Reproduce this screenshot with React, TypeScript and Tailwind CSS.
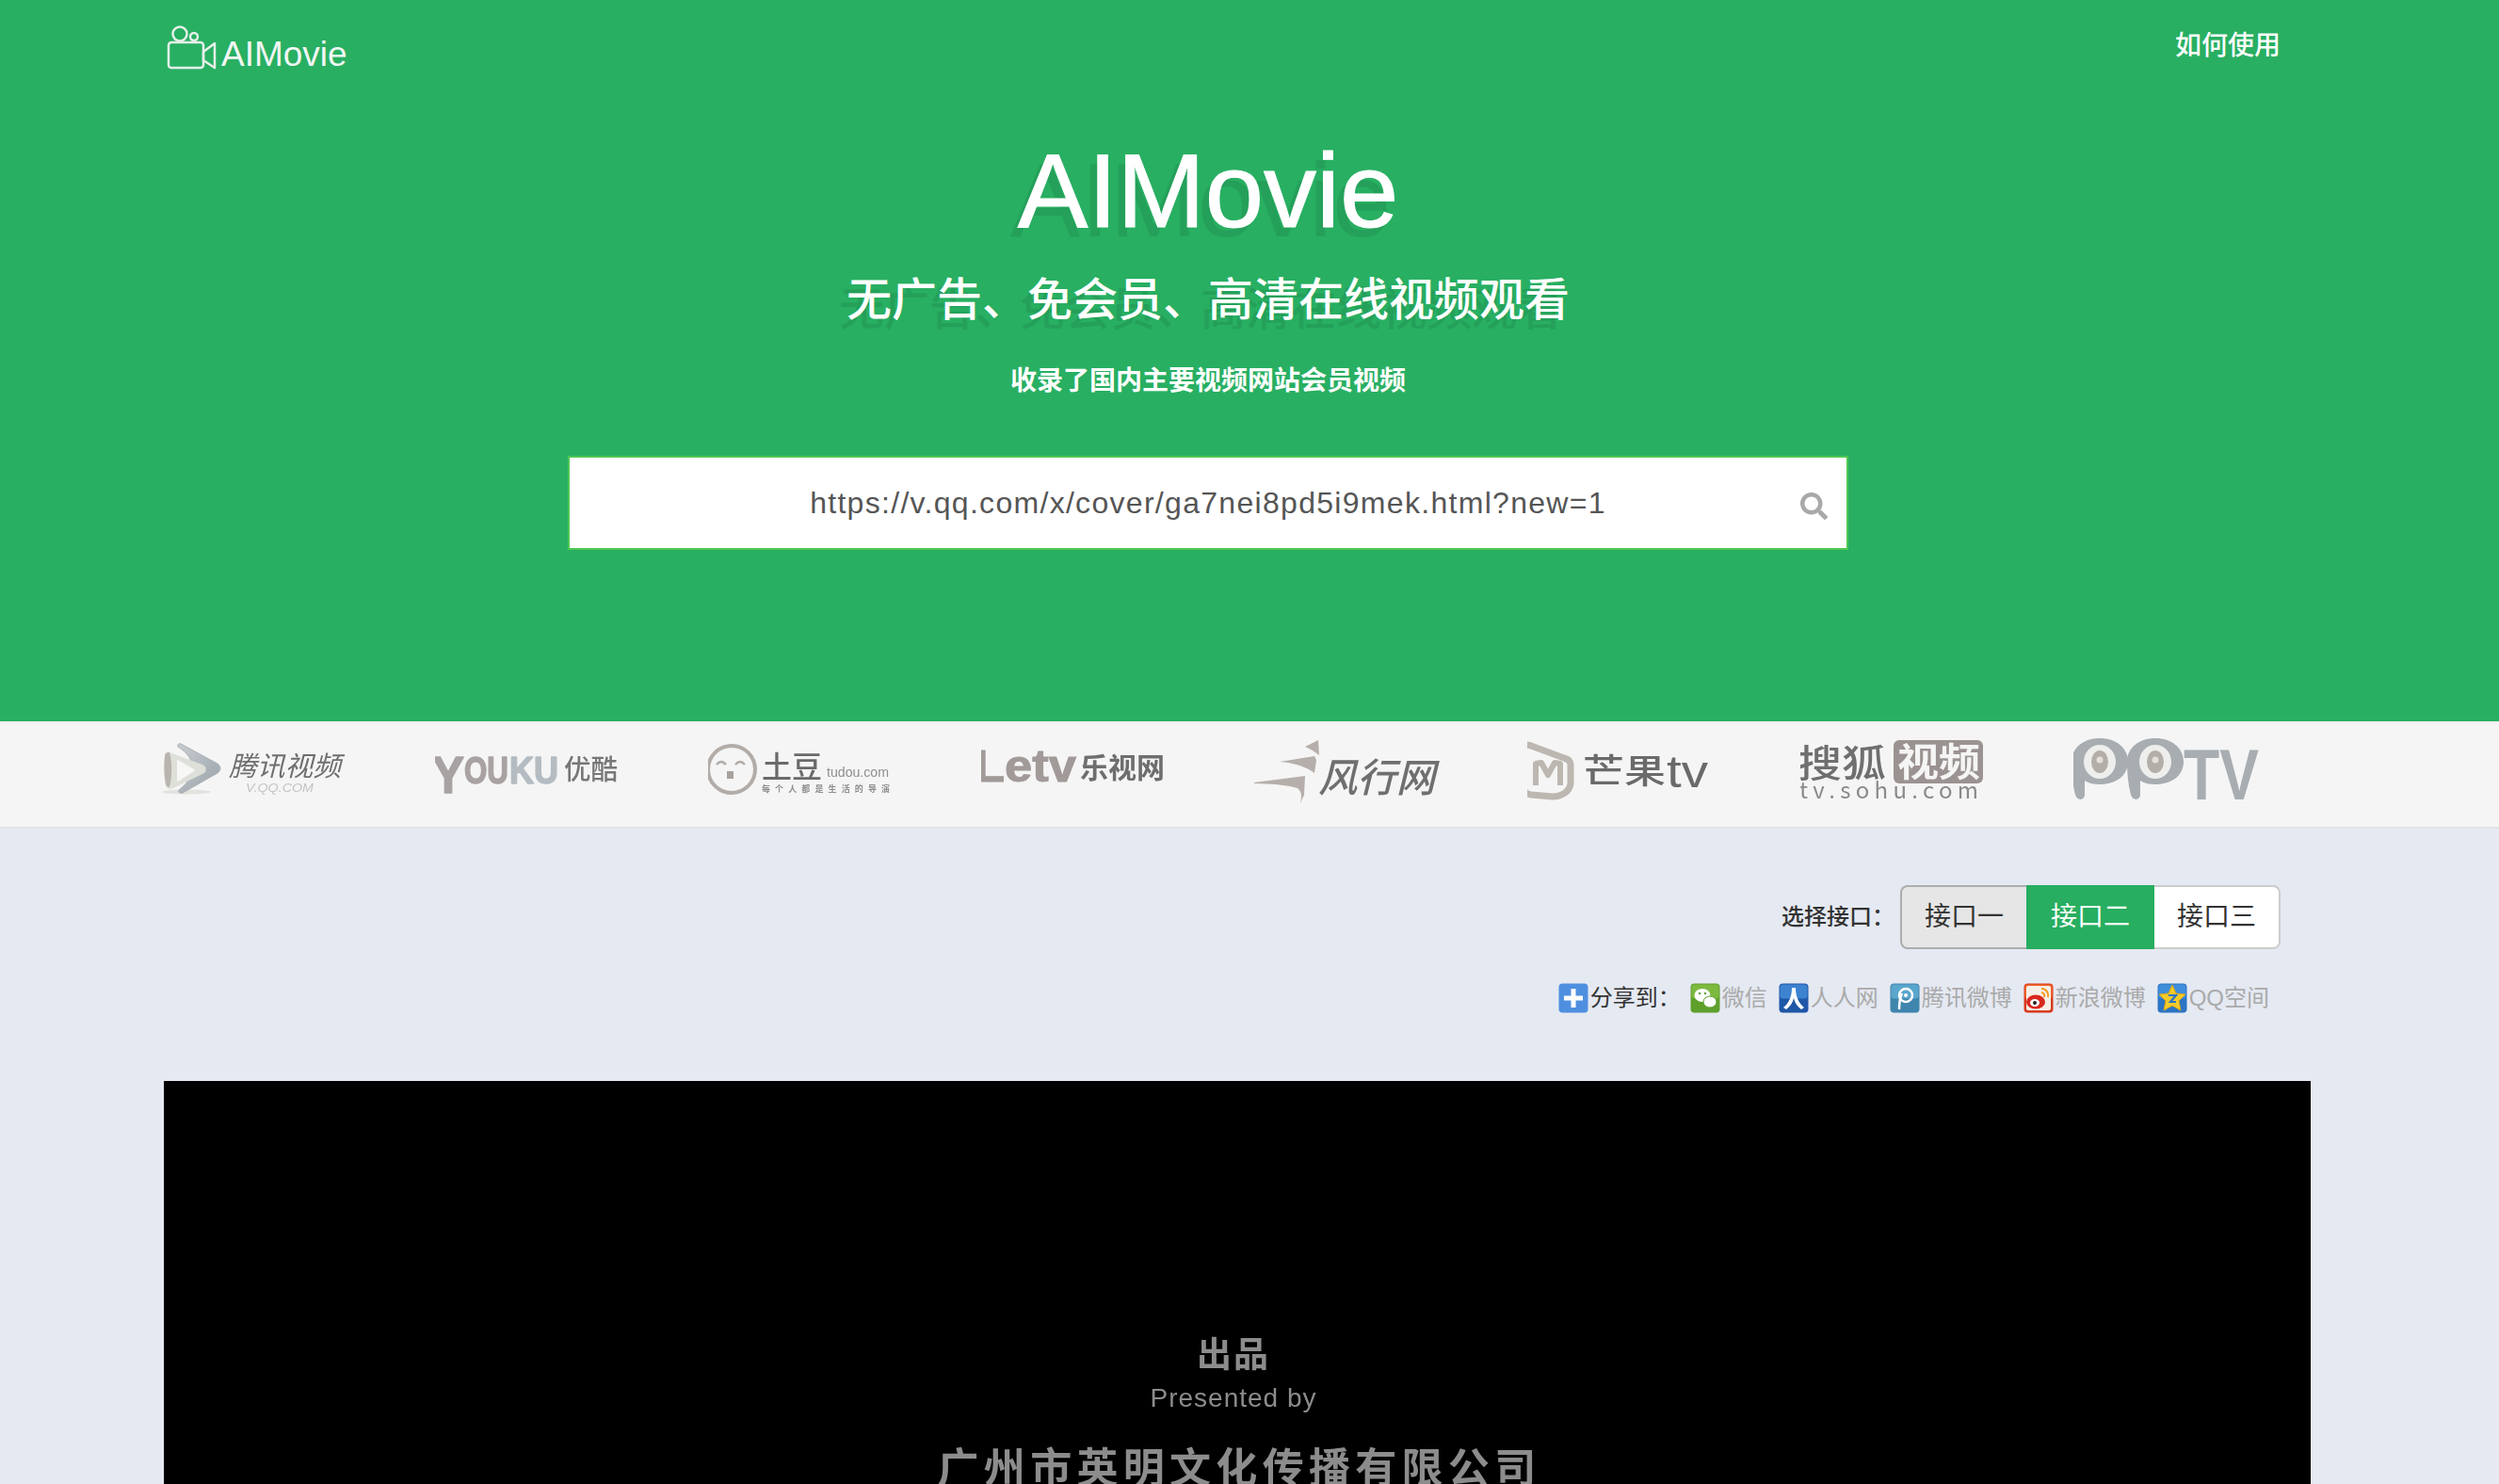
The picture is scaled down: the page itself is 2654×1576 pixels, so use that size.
import { FaSearch } from "react-icons/fa";

const cjk = "font-['Liberation_Sans','Noto_Sans_CJK_SC',sans-serif]";
const logoFont = "'Noto Sans CJK SC', sans-serif";
const latinFont = "'Liberation Sans', sans-serif";

function CameraLogo() {
    return (
        <svg width="54" height="52" viewBox="0 0 54 52" fill="none" stroke="#e6efe9" strokeWidth="2.5" strokeLinejoin="round">
            <circle cx="14" cy="12" r="7.5" />
            <circle cx="29" cy="15" r="4" />
            <rect x="2" y="21" width="37" height="27" rx="3" />
            <path d="M39 31l12-9v26l-12-8z" />
        </svg>
    );
}

function TencentLogo() {
    return (
        <svg width="240" height="110" viewBox="0 0 240 110">
            <defs>
                <linearGradient id="tc" x1="0" y1="0" x2="1" y2="1">
                    <stop offset="0" stopColor="#c9cdd0" />
                    <stop offset="1" stopColor="#98a2aa" />
                </linearGradient>
            </defs>
            <ellipse cx="26" cy="75" rx="26" ry="2.5" fill="#e2e2de" />
            <path d="M20 24l39 21c4 3 4 7 0 10L22 76c-3 1-5-1-4-3 9-7 14-14 14-24s-6-16-15-22c-1-2 1-4 3-3z" fill="url(#tc)" stroke="#a9b0b6" strokeLinejoin="round" />
            <path d="M8 33l35 13c5 2 5 8 0 10L12 71c-4 2-7 1-8-3-2-11-2-21-1-31 0-3 2-5 5-4z" fill="#dde0d8" />
            <path d="M3 37c0-3 2-4 5-4 3 11 3 25 0 37-2 0-3-1-4-3-2-10-2-20-1-30z" fill="#b9b4ae" />
            <path d="M17 42l17 10-17 11z" fill="#f7f7f5" stroke="#f7f7f5" strokeWidth="2" strokeLinejoin="round" />
            <text x="71" y="58" fontFamily={logoFont} fontSize="29" fontStyle="italic" fill="#6f6f6f" textLength="119" lengthAdjust="spacingAndGlyphs">腾讯视频</text>
            <text x="89" y="75" fontFamily={latinFont} fontSize="12" fontStyle="italic" fill="#c4c4c4" textLength="72" lengthAdjust="spacingAndGlyphs">V.QQ.COM</text>
        </svg>
    );
}

function YoukuLogo() {
    return (
        <svg width="240" height="110" viewBox="6 0 240 110">
            <text fontFamily={latinFont} fontWeight="700" stroke="#a9a2a2" strokeWidth="1.5" strokeLinejoin="round" fill="#a9a2a2">
                <tspan x="3" y="76" fontSize="56" textLength="34" lengthAdjust="spacingAndGlyphs">Y</tspan>
                <tspan x="37" y="66" fontSize="40" textLength="47" lengthAdjust="spacingAndGlyphs">OU</tspan>
                <tspan x="85" y="66" fontSize="40" fill="#b4bcc2" stroke="#b4bcc2" textLength="52" lengthAdjust="spacingAndGlyphs">KU</tspan>
            </text>
            <text x="143" y="62" fontFamily={logoFont} fontSize="29" fontWeight="500" fill="#777" textLength="57" lengthAdjust="spacingAndGlyphs">优酷</text>
        </svg>
    );
}

function TudouLogo() {
    return (
        <svg width="240" height="110" viewBox="5 0 240 110">
            <circle cx="30" cy="51" r="25" fill="none" stroke="#b2aca8" strokeWidth="4" />
            <path d="M14 46q5-6 10 0M34 46q5-6 10 0" fill="none" stroke="#b2aca8" strokeWidth="2.5" />
            <rect x="25" y="53" width="7" height="8" fill="#a8a29e" />
            <text x="62" y="60" fontFamily={logoFont} fontSize="32" fontWeight="500" fill="#6a6a6a" textLength="64" lengthAdjust="spacingAndGlyphs">土豆</text>
            <text x="131" y="59" fontFamily={latinFont} fontSize="14" fill="#8f8f8f" textLength="66" lengthAdjust="spacingAndGlyphs">tudou.com</text>
            <text x="62" y="75" fontFamily={logoFont} fontSize="9" fontWeight="700" fill="#8e8e8e" textLength="136">每个人都是生活的导演</text>
        </svg>
    );
}

function LetvLogo() {
    return (
        <svg width="240" height="110" viewBox="8 0 240 110">
            <text x="1" y="64" fontFamily={latinFont} fontSize="48" fontWeight="700" fill="#a19a98" stroke="#a19a98" textLength="108" lengthAdjust="spacingAndGlyphs">Letv</text>
            <text x="113" y="60" fontFamily={logoFont} fontSize="30" fontWeight="700" fill="#6e6e6e" textLength="90" lengthAdjust="spacingAndGlyphs">乐视网</text>
        </svg>
    );
}

function FengxingLogo() {
    return (
        <svg width="240" height="110" viewBox="8 0 240 110">
            <path d="M62 27l14-7 1 16c-5-4-10-7-15-9z" fill="#b5aeaa" />
            <path d="M35 43l37-6 2 4-2 14c-9-7-22-11-37-12z" fill="#b5aeaa" />
            <path d="M0 66l62-8-1 20-4 9c2-8 1-13-3-16-14-4-34-5-54-5z" fill="#b5aeaa" />
            <text x="76" y="75" fontFamily={logoFont} fontSize="42" fontStyle="italic" fontWeight="500" fill="#6f6f6f" textLength="124" lengthAdjust="spacingAndGlyphs">风行网</text>
        </svg>
    );
}

function MangoLogo() {
    return (
        <svg width="240" height="110" viewBox="6 0 240 110">
            <path d="M10 26c-4-2-8 0-8 5v38c0 6 3 8 8 9l23 2c9 0 18-5 19-14V46c0-4-3-6-7-7z" fill="none" stroke="#bdb7b1" strokeWidth="7" strokeLinejoin="round" />
            <path d="M15 68V45l6-1 7 13 7-13 6 1v23" fill="none" stroke="#bdb7b1" strokeWidth="6" strokeLinejoin="round" />
            <text x="65" y="66" fontFamily={logoFont} fontSize="36" fontWeight="500" fill="#6a6a6a" textLength="88" lengthAdjust="spacingAndGlyphs">芒果</text>
            <text x="154" y="70" fontFamily={latinFont} fontSize="48" fill="#6a6a6a" textLength="44" lengthAdjust="spacingAndGlyphs">tv</text>
        </svg>
    );
}

function SohuLogo() {
    return (
        <svg width="240" height="110" viewBox="3 0 240 110">
            <text x="0" y="59" fontFamily={logoFont} fontSize="40" fontWeight="500" fill="#6f6f6f" textLength="94" lengthAdjust="spacingAndGlyphs">搜狐</text>
            <rect x="102" y="20" width="95" height="46" rx="6" fill="#9b9391" />
            <text x="106" y="58" fontFamily={logoFont} fontSize="41" fontWeight="700" fill="#f5f5f5" textLength="88" lengthAdjust="spacingAndGlyphs">视频</text>
            <text x="2" y="82" fontFamily={logoFont} fontSize="24" fill="#8a8a8a" textLength="190">tv.sohu.com</text>
        </svg>
    );
}

function PptvLogo() {
    const speaker = (cx: number) => (
        <>
            <path d={`M${cx - 30} 43c0-15 13-25 30-25s30 10 30 25-13 24-30 24c-6 0-11-1-16-4v15c0 6-8 7-10 0-3-11-4-24-4-35z`} fill="#a8adb1" />
            <ellipse cx={cx} cy={43} rx="17" ry="18" fill="#eeeeec" />
            <ellipse cx={cx} cy={43} rx="9" ry="12" fill="#b4aea8" />
            <circle cx={cx} cy={41} r="3.5" fill="#e4dfd9" />
        </>
    );
    return (
        <svg width="240" height="110" viewBox="5 0 240 110">
            {speaker(33)}
            {speaker(92)}
            <text x="122" y="83" fontFamily={latinFont} fontSize="76" fontWeight="700" fill="#a8adb1" textLength="80" lengthAdjust="spacingAndGlyphs">TV</text>
        </svg>
    );
}

function IconFrame({ from, to, children }: { from: string; to: string; children: React.ReactNode }) {
    return (
        <svg width="32" height="32" viewBox="0 0 32 32" className="shrink-0">
            <rect x="0.5" y="0.5" width="31" height="31" rx="4" fill={to} />
            <rect x="1.5" y="1.5" width="29" height="15" rx="3" fill={from} />
            {children}
        </svg>
    );
}

const shareItems = [
    {
        label: "微信",
        icon: (
            <IconFrame from="#7cb93f" to="#5fa02c">
                <ellipse cx="13" cy="13" rx="8.5" ry="7" fill="#fff" />
                <ellipse cx="21" cy="20" rx="7" ry="6" fill="#fff" stroke="#5fa02c" />
                <circle cx="10" cy="11" r="1.2" fill="#5fa02c" />
                <circle cx="16" cy="11" r="1.2" fill="#5fa02c" />
            </IconFrame>
        ),
    },
    {
        label: "人人网",
        icon: (
            <IconFrame from="#3d83d0" to="#1f57a8">
                <path d="M14 5h4c0 9 3 16 9 21l-3 2c-4-3-7-7-8-12-1 5-4 9-8 12l-3-2C11 21 14 14 14 5z" fill="#fff" />
            </IconFrame>
        ),
    },
    {
        label: "腾讯微博",
        icon: (
            <IconFrame from="#5aa6cc" to="#3f85ad">
                <circle cx="17" cy="13" r="7" fill="none" stroke="#fff" strokeWidth="2.5" />
                <path d="M10 28c0-8 1-13 3-17" fill="none" stroke="#fff" strokeWidth="2.5" />
                <circle cx="17" cy="13" r="2" fill="#fff" />
            </IconFrame>
        ),
    },
    {
        label: "新浪微博",
        icon: (
            <IconFrame from="#f0682a" to="#d83b1e">
                <rect x="3" y="3" width="26" height="26" rx="2" fill="#f6efe8" />
                <ellipse cx="13" cy="20" rx="10" ry="7.5" fill="#d9281e" />
                <ellipse cx="12" cy="21" rx="5" ry="4" fill="#fff" />
                <circle cx="12" cy="21" r="2" fill="#222" />
                <path d="M19 6c5 0 8 4 7 9M19 10c2 0 4 2 3 5" fill="none" stroke="#f39a1e" strokeWidth="2" />
            </IconFrame>
        ),
    },
    {
        label: "QQ空间",
        icon: (
            <IconFrame from="#3f8edb" to="#2c74c4">
                <path d="M16 2l4 9 10 1-7 7 2 10-9-5-9 5 2-10-7-7 10-1z" fill="#f5cb2c" stroke="#d9a514" />
                <path d="M12 13h8l-6 7h6" fill="none" stroke="#2c74c4" strokeWidth="2.2" />
            </IconFrame>
        ),
    },
];

const logos = [TencentLogo, YoukuLogo, TudouLogo, LetvLogo, FengxingLogo, MangoLogo, SohuLogo, PptvLogo];

export default function App() {
    return (
        <div className={`h-[1576px] overflow-hidden bg-[#e5e9f2] ${cjk}`}>
            <section className="h-[766px] bg-[#28af62] text-white">
                <nav className="flex h-[94px] items-start justify-between pl-[177px] pr-[232px]">
                    <a className="mt-[24px] flex items-end gap-[4px]">
                        <CameraLogo />
                        <span className="translate-y-[3px] text-[37px] leading-[42px] text-[#f1f6f3]">AIMovie</span>
                    </a>
                    <a className="mt-[29px] text-[28px] font-medium leading-[40px]">如何使用</a>
                </nav>
                <div className="flex flex-col items-center pr-[88px]">
                    <h1 className="mt-[53px] text-[112px] leading-[112px] [-webkit-text-stroke:1px_white] [text-shadow:-8px_10px_0_#24a05a]">AIMovie</h1>
                    <h2 className="mt-[26px] text-[48px] font-medium leading-[68px] [text-shadow:-8px_10px_0_#24a05a]">无广告、免会员、高清在线视频观看</h2>
                    <p className="mt-[32px] text-[28px] font-bold leading-[40px]">收录了国内主要视频网站会员视频</p>
                    <div className="relative mt-[59px] flex h-[100px] w-[1360px] items-center justify-center border-2 border-[#4fc752] bg-white text-[32px] tracking-[1.3px] text-[#555]">
                        https://v.qq.com/x/cover/ga7nei8pd5i9mek.html?new=1
                        <FaSearch className="absolute right-[20px] top-[37px] text-[29px] text-[#a9a9a9]" />
                    </div>
                </div>
            </section>

            <section className="flex h-[114px] border-b-2 border-[#e3e3e3] bg-[#f5f5f5] pl-[172px] shadow-[inset_0_3px_3px_-2px_#e8e8e8]">
                {logos.map((Logo, i) => (
                    <div key={i} className="w-[290px] shrink-0 blur-[0.4px]">
                        <Logo />
                    </div>
                ))}
            </section>

            <div className="flex flex-col items-end pr-[232px]">
                <div className="mt-[60px] flex items-center">
                    <span className="w-[126px] whitespace-nowrap text-[24px] font-medium text-[#333]">选择接口：</span>
                    <div className="flex h-[68px] text-[28px]">
                        <button className="w-[134px] rounded-l-[8px] border-2 border-r-0 border-[#adadad] bg-[#e6e6e6] text-[#333]">接口一</button>
                        <button className="w-[136px] bg-[#27ae60] text-white">接口二</button>
                        <button className="w-[134px] rounded-r-[8px] border-2 border-l-0 border-[#ccc] bg-white text-[#333]">接口三</button>
                    </div>
                </div>
                <div className="mt-[36px] flex h-[32px] items-center pr-[12px] text-[24px] text-[#aaa]">
                    <svg width="32" height="32" viewBox="0 0 32 32" className="shrink-0">
                        <rect x="0.5" y="0.5" width="31" height="31" rx="4" fill="#4f8fe0" />
                        <path d="M13.5 6h5v7.5H26v5h-7.5V26h-5v-7.5H6v-5h7.5z" fill="#fff" />
                    </svg>
                    <span className="ml-[2px] mr-[10px] w-[96px] whitespace-nowrap text-[#333]">分享到：</span>
                    {shareItems.map((item) => (
                        <a key={item.label} className="mr-[12px] flex items-center gap-[2px] whitespace-nowrap last:mr-0">
                            {item.icon}
                            <span>{item.label}</span>
                        </a>
                    ))}
                </div>
            </div>

            <div className="ml-[174px] mr-[200px] mt-[72px] flex h-[600px] flex-col items-center bg-black pl-[4px] text-[#8c8c8c] blur-[0.5px]">
                <div className="mr-[12px] mt-[270px] text-[37px] font-bold leading-[44px] tracking-[2px]">出品</div>
                <div className="mr-[12px] mt-[2px] text-[28px] leading-[42px] tracking-[1px]">Presented by</div>
                <div className="mt-[24px] whitespace-nowrap text-[44px] font-bold leading-[60px] tracking-[5.3px]">广州市英明文化传播有限公司</div>
            </div>
        </div>
    );
}
